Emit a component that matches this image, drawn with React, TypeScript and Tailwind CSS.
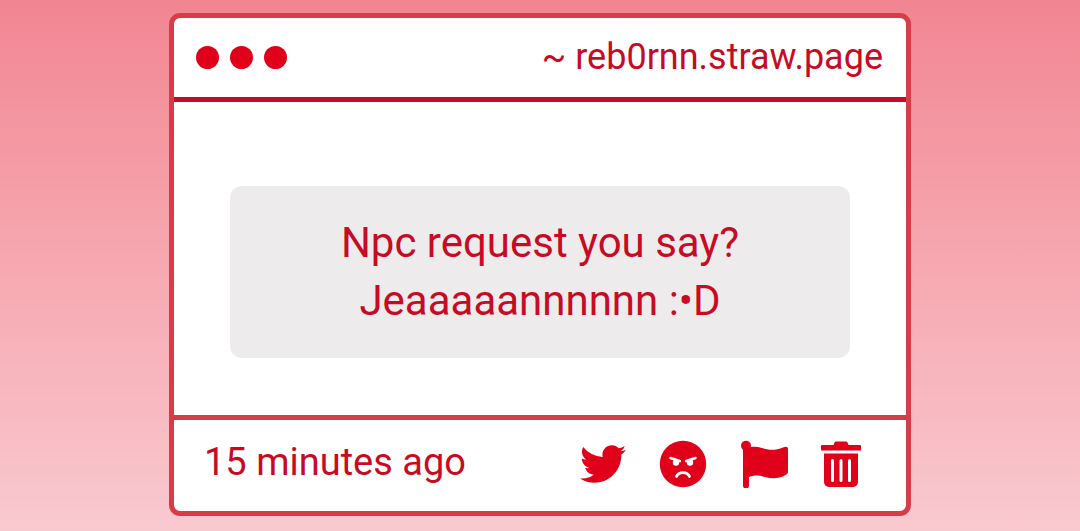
import { FaTwitter } from "react-icons/fa";

function AngryIcon() {
  return (
    <svg viewBox="0 0 48 48" className="size-12" aria-hidden="true">
      <circle cx="24" cy="24" r="23.200" fill="currentColor" />
      <g fill="#fff">
        <circle cx="17" cy="22.500" r="3.200" />
        <circle cx="31" cy="22.500" r="3.200" />
      </g>
      <g fill="none" stroke="#fff" strokeLinecap="round">
        <path strokeWidth="2.600" d="M11.500 18L20.800 21M36.500 18L27.200 21" />
        <path strokeWidth="2.800" d="M17.500 36.500C19.500 31.200 28.500 31.200 30.500 36.500" />
      </g>
    </svg>
  );
}

function FlagIcon() {
  return (
    <svg viewBox="0 0 48 48" className="size-12" fill="currentColor" aria-hidden="true">
      <circle cx="6" cy="5.800" r="5" />
      <path d="M3 6h6v39.500a3 3 0 0 1-6 0z" />
      <path d="M8 8C12 6 17 6.500 22 8C29 10.500 36 10.500 43 7.500C46 6 48 6.500 48 9V31C48 33 47.500 34 45.500 35C39 39 32 39 25 37C19 35 14 35 8 37.500z" />
    </svg>
  );
}

function TrashIcon() {
  return (
    <svg viewBox="0 0 40 48" className="h-12 w-10" aria-hidden="true">
      <path fill="currentColor" d="M1 5h11.500l1-2.500q.5-1 1.500-1h10q1 0 1.500 1l1 2.500H39a1 1 0 0 1 1 1v4.500H0V6a1 1 0 0 1 1-1z" />
      <path fill="currentColor" d="M3 13.500h34V42a5 5 0 0 1-5 5H8a5 5 0 0 1-5-5z" />
      <path stroke="#fff" strokeWidth="3" strokeLinecap="round" d="M11.500 20.500v20M20 20.500v20M28.500 20.500v20" />
    </svg>
  );
}

export default function App() {
  return (
    <main className="min-h-screen bg-linear-to-b from-[#f18692] to-[#f9c9d0] px-6 pt-[13px] font-[Roboto,sans-serif] text-[#c80b24]">
      <article className="mx-auto max-w-[742px] overflow-hidden rounded-[11px] border-5 border-[#d83c48] bg-white">
        <header className="flex h-[84px] items-center justify-between border-b-5 border-[#c30d26] pr-[23px] pl-[22px]">
          <div className="flex gap-[11px] text-[#e1001a]">
            <span className="size-[23px] rounded-full bg-current" />
            <span className="size-[23px] rounded-full bg-current" />
            <span className="size-[23px] rounded-full bg-current" />
          </div>
          <a href="#profile" className="pb-0.5 text-[36px] leading-10">~ reb0rnn.straw.page</a>
        </header>
        <div className="px-14 pt-[84px] pb-[57px]">
          <p className="rounded-xl bg-[#eeebec] px-6 py-7 text-center text-[42px] leading-[58px]">
            Npc request you say?
            <br />
            Jeaaaaannnnnn :•D
          </p>
        </div>
        <footer className="flex h-24 items-center justify-between border-t-5 border-[#d83c48] pr-[45px] pb-1 pl-[30px]">
          <time className="pb-1 text-[38px] leading-10">15 minutes ago</time>
          <div className="flex items-center gap-[33px] text-[#e1001a]">
            <button type="button" aria-label="Share on Twitter"><FaTwitter size={46} /></button>
            <button type="button" aria-label="Block"><AngryIcon /></button>
            <button type="button" aria-label="Report"><FlagIcon /></button>
            <button type="button" aria-label="Delete"><TrashIcon /></button>
          </div>
        </footer>
      </article>
    </main>
  );
}
